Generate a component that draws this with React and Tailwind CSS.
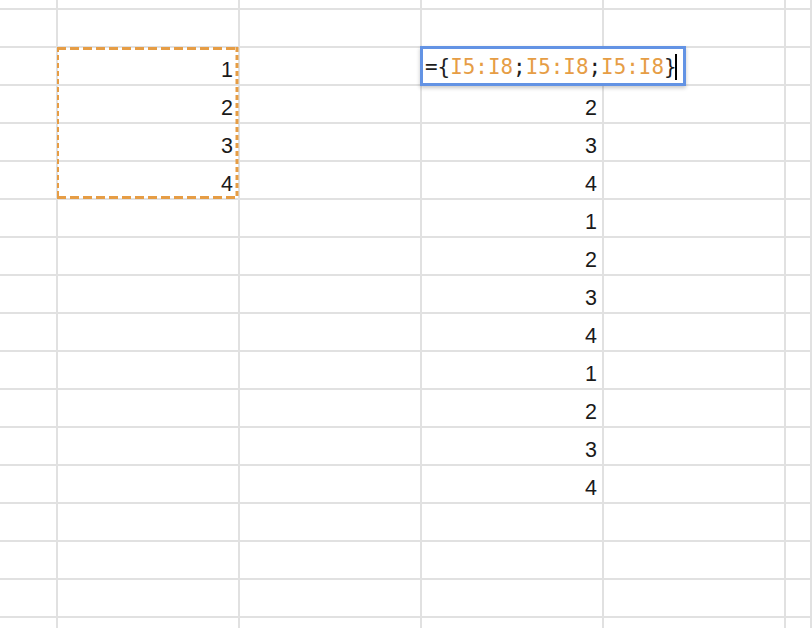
import React from 'react'

const COLS = ['w-[58px]', 'w-[182px]', 'w-[182px]', 'w-[182px]', 'w-[182px]', 'flex-1']
// values shown in column C (index 1) and column E (index 3), keyed by row index
const colC = { 2: 1, 3: 2, 4: 3, 5: 4 }
const colE = { 3: 2, 4: 3, 5: 4, 6: 1, 7: 2, 8: 3, 9: 4, 10: 1, 11: 2, 12: 3, 13: 4 }

const Cell = ({ width, value }) => (
    <div className={`${width} shrink-0 h-full border-r-2 border-b-2 border-[#e1e1e1] flex items-end justify-end pr-[5px] pb-[4px]`}>
        {value !== undefined && (
            <span className="text-[21.5px] leading-[20px] text-[#1a1a1a]" style={{ fontFamily: '"Liberation Sans", Arial, sans-serif' }}>
                {value}
            </span>
        )}
    </div>
)

const Row = ({ index, height }) => (
    <div className={`flex ${height}`}>
        {COLS.map((w, c) => (
            <Cell
                key={c}
                width={w}
                value={c === 1 ? colC[index] : c === 3 ? colE[index] : undefined}
            />
        ))}
    </div>
)

const Ref = ({ children }) => <span className="text-[#e69d45]">{children}</span>

const App = () => {
    const rows = Array.from({ length: 17 }, (_, i) => i + 1)

    return (
        <div className="relative w-[812px] h-[628px] overflow-hidden bg-white">
            <Row index={0} height="h-[10px]" />
            {rows.map((r) => (
                <Row key={r} index={r} height="h-[38px]" />
            ))}

            {/* copy selection marquee around C5:C8 */}
            <svg className="absolute left-[56px] top-[46px]" width="184" height="155" viewBox="0 0 184 155">
                <line x1="1" y1="2.5" x2="182" y2="2.5" stroke="#e69d45" strokeWidth="3" strokeDasharray="9 4" />
                <line x1="1" y1="151.5" x2="182" y2="151.5" stroke="#e69d45" strokeWidth="3" strokeDasharray="9 4" />
                <line x1="2" y1="1" x2="2" y2="153" stroke="#e69d45" strokeWidth="2" strokeDasharray="5 3" />
                <line x1="181" y1="1" x2="181" y2="153" stroke="#e69d45" strokeWidth="3" strokeDasharray="5 3" />
            </svg>

            {/* in-cell formula editor */}
            <div className="absolute left-[420px] top-[46px] w-[266px] h-[40px] bg-white border-[3px] border-[#6393e4] shadow-[0_2px_4px_rgba(0,0,0,0.22)] flex items-center pl-[2px] pt-[3px]">
                <span
                    className="text-[20.9px] leading-none text-[#1d1d1d] whitespace-pre"
                    style={{ fontFamily: '"DejaVu Sans Mono", "Liberation Mono", monospace' }}
                >
                    ={'{'}<Ref>I5:I8</Ref>;<Ref>I5:I8</Ref>;<Ref>I5:I8</Ref>{'}'}
                </span>
                <span className="inline-block w-[2px] h-[26px] bg-black ml-[-2px] mt-[-2px]" />
            </div>
        </div>
    )
}

export default App
